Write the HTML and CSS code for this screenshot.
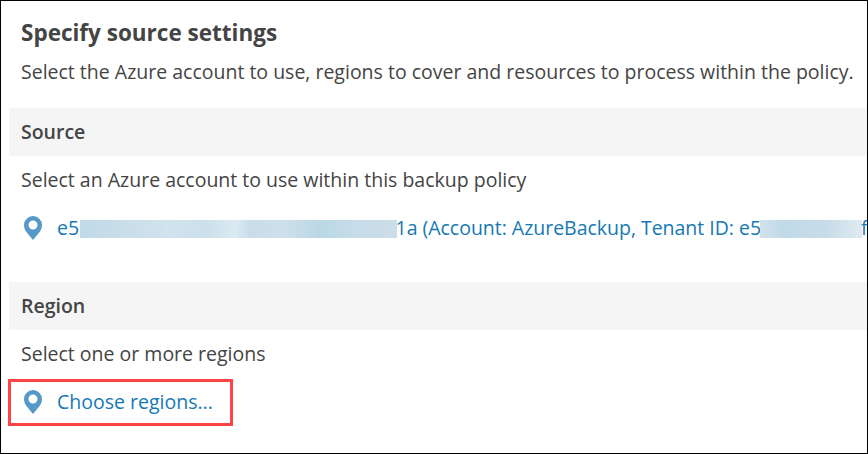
FILE: index.html
```html
<!DOCTYPE html>
<html lang="en">
<head>
<meta charset="utf-8">
<title>Specify source settings</title>
<link rel="stylesheet" href="styles.css">
</head>
<body>
<main class="panel">
  <header class="intro">
    <h1 class="title">Specify source settings</h1>
    <p class="text lead">Select the Azure account to use, regions to cover and resources to process within the policy.</p>
  </header>
  <section class="section">
    <h2 class="bar">Source</h2>
    <p class="text hint">Select an Azure account to use within this backup policy</p>
    <div class="choice">
      <svg class="pin" viewBox="0 0 18 24"><path fill-rule="evenodd" d="M9 0a9 9 0 0 0-9 9c0 2.500.8 4.500 2 6.500L9 24l7-8.500c1.200-2 2-4 2-6.500a9 9 0 0 0-9-9zm0 4.500a4.500 4.500 0 1 1 0 9 4.500 4.500 0 0 1 0-9z"/></svg>
      <a class="link account"><span class="start">e5</span><span class="mask mask-long"></span><span class="middle">1a (Account: AzureBackup, Tenant ID: e5</span><span class="mask mask-short"></span><span class="end">f</span></a>
    </div>
  </section>
  <section class="section">
    <h2 class="bar">Region</h2>
    <p class="text hint">Select one or more regions</p>
    <div class="choice highlighted">
      <svg class="pin" viewBox="0 0 18 24"><path fill-rule="evenodd" d="M9 0a9 9 0 0 0-9 9c0 2.500.8 4.500 2 6.500L9 24l7-8.500c1.200-2 2-4 2-6.500a9 9 0 0 0-9-9zm0 4.500a4.500 4.500 0 1 1 0 9 4.500 4.500 0 0 1 0-9z"/></svg>
      <a class="link">Choose regions...</a>
    </div>
  </section>
</main>
</body>
</html>
```
FILE: styles.css
```css
* { box-sizing: border-box; }
body {
  margin: 0;
  background: #fff;
  color: #444;
  font-family: "Open Sans", "Noto Sans", sans-serif;
  font-size: 19.5px;
}
.panel {
  height: 454px;
  border: 1px solid #000;
  padding-left: 8px;
  overflow: hidden;
}
.intro { height: 107px; padding: 16px 0 0 12px; }
.title { margin: 0; font-size: 22.5px; line-height: 32px; font-weight: 700; white-space: nowrap; }
.text { margin: 0; line-height: 28px; white-space: nowrap; }
.lead { margin-top: 9px; }
.section { height: 174px; }
.bar {
  margin: 0;
  height: 48px;
  padding-left: 12px;
  background: #f5f5f5;
  font-size: 19.5px;
  line-height: 47px;
  font-weight: 600;
}
.hint { height: 48px; padding-left: 12px; line-height: 47px; }
.choice { display: flex; align-items: center; height: 48px; padding-left: 15px; }
.pin { flex: none; width: 18px; height: 24px; margin-right: 15px; fill: #5599c8; }
.link { color: #1579b3; line-height: 46px; white-space: nowrap; }
.account { display: flex; align-items: center; }
.start { width: 23px; }
.middle { width: 363px; text-indent: -1.5px; letter-spacing: -0.02px; }
.end { margin-left: -1px; }
.mask { flex: none; height: 18px; margin-top: 2px; }
.mask-long {
  width: 317px;
  background: linear-gradient(90deg, #c1dae8 0%, #c8dee9 14%, #d1e3ed 28%, #cce0eb 40%, #dceaf2 49%, #c9dce9 54%, #cee0eb 64%, #b9d8e4 76%, #c6dce8 86%, #cbdde9 100%);
}
.mask-short {
  width: 102px;
  background: linear-gradient(90deg, #d2e2eb 0%, #c1dae8 22%, #c7dce8 65%, #dfebf2 100%);
}
.highlighted {
  width: 225px;
  height: 47px;
  margin: 1px 0 0 -1px;
  padding: 0 0 1px 13px;
  border: 3px solid #ff4444;
}
```
